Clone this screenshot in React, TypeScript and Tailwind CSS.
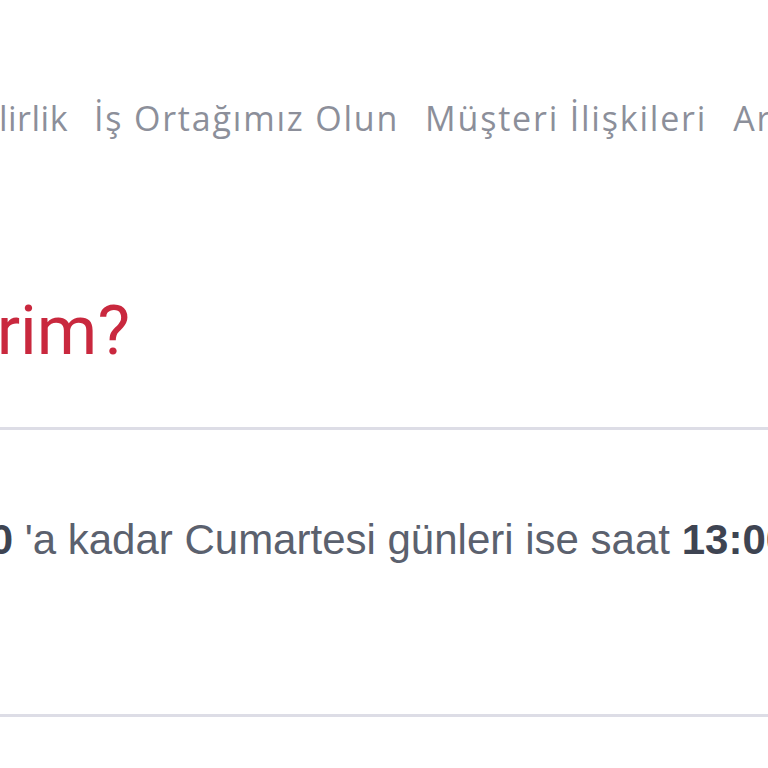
import React from 'react';

const navItems = ['İş Ortağımız Olun', 'Müşteri İlişkileri', 'Araçlar'];

export default function App() {
  return (
    <div className="w-[768px] h-[768px] bg-white overflow-hidden">
      {/* Top navigation */}
      <nav
        className="flex items-center gap-[26px] whitespace-nowrap pt-[96px] h-[140px] text-[34px] leading-[44px] tracking-[1.8px] text-[#8c8f9a]"
        style={{ fontFamily: '"Open Sans", sans-serif' }}
      >
        <div className="w-[68px] shrink-0 overflow-hidden flex justify-end">
          <span className="tracking-[0.5px]">Sürdürülebilirlik</span>
        </div>
        {navItems.map(item => (
          <a key={item} className="shrink-0">{item}</a>
        ))}
      </nav>

      {/* Question */}
      <div className="mt-[153px] flex" style={{ fontFamily: 'Roboto, sans-serif' }}>
        <div className="w-[130px] overflow-hidden flex justify-end whitespace-nowrap">
          <h2 className="text-[69px] leading-[76px] text-[#c9283e]">Nasıl sipariş verebilirim?</h2>
        </div>
      </div>

      <div className="mt-[58px] h-[3px] bg-[#dddde6]" />

      {/* Answer */}
      <div
        className="mt-[85px] flex whitespace-nowrap text-[42px] leading-[50px] text-[#5b616e]"
        style={{ fontFamily: '"Liberation Sans", Arial, sans-serif' }}
      >
        <div className="w-[13px] shrink-0 overflow-hidden flex justify-end">
          <span>saat <b className="text-[#3e4452]">18:00</b></span>
        </div>
        <p>
          &nbsp;'a kadar Cumartesi günleri ise saat <b className="text-[#3e4452]">13:00</b> 'a kadar
        </p>
      </div>

      <div className="mt-[149px] h-[3px] bg-[#dddde6]" />
    </div>
  );
}
